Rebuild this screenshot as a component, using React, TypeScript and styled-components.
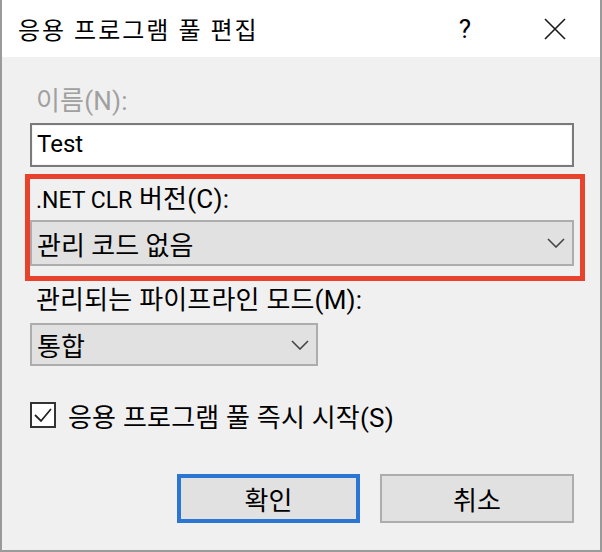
import styled, { createGlobalStyle } from "styled-components";

const GlobalStyle = createGlobalStyle`
    html, body {
        margin: 0;
        padding: 0;
        background: #ffffff;
    }
    * {
        box-sizing: border-box;
    }
`

const Window = styled.div`
    width: 602px;
    height: 552px;
    display: flex;
    flex-direction: column;
    border: 2px solid #9a9a9a;
    border-top: none;
    font-family: Roboto, "Noto Sans CJK KR", sans-serif;
    color: #000000;
    overflow: hidden;
`

const TitleBar = styled.div`
    height: 57px;
    flex: none;
    display: flex;
    align-items: center;
    background: #ffffff;
    padding-left: 16px;
`

const Title = styled.div`
    flex: 1;
    font-size: 24px;
    letter-spacing: 2px;
`

const HelpButton = styled.div`
    width: 90px;
    text-align: center;
    font-size: 26px;
`

const CloseButton = styled.div`
    width: 90px;
    height: 57px;
    display: flex;
    align-items: center;
    justify-content: center;
`

const Body = styled.div`
    flex: 1;
    background: #f0f0f0;
    display: flex;
    flex-direction: column;
    padding: 27px 26px 0 28px;
`

const Label = styled.div<{ $disabled?: boolean }>`
    height: 34px;
    line-height: 34px;
    font-size: 26px;
    letter-spacing: 0.2px;
    padding-left: 6px;
    color: ${p => (p.$disabled ? "#a0a0a0" : "#000000")};
    white-space: nowrap;
`

/* latin run inside a korean label: the original UI font draws it smaller */
const Latin = styled.span`
    font-size: 23px;
    letter-spacing: 0;
`

const TextBox = styled.div`
    height: 44px;
    margin-top: 5px;
    background: #ffffff;
    border: 2px solid #7a7a7a;
    box-shadow: inset 0 0 0 1px #f4f4f4;
    padding-left: 5px;
    font-size: 24px;
    line-height: 38px;
`

const Highlight = styled.div`
    margin: 7px -11px 0 -5px;
    border: 5px solid #e8412c;
    padding: 3px 6px 10px 0;
`

const Combo = styled.div<{ $width?: number; $height: number; $gap: number }>`
    width: ${p => (p.$width ? `${p.$width}px` : "auto")};
    height: ${p => p.$height}px;
    margin-top: ${p => p.$gap}px;
    display: flex;
    align-items: center;
    justify-content: space-between;
    background: #e1e1e1;
    border: 2px solid #adadad;
    padding: 0 7px 0 5px;
    font-size: 26px;
`

const CheckRow = styled.div`
    display: flex;
    align-items: center;
    gap: 12px;
    margin-top: 36px;
    height: 26px;
    font-size: 26px;
    letter-spacing: 0.2px;
`

const CheckBox = styled.div`
    width: 26px;
    height: 26px;
    flex: none;
    background: #ffffff;
    border: 2px solid #333333;
    display: flex;
    align-items: center;
    justify-content: center;
`

const ButtonRow = styled.div`
    display: flex;
    justify-content: flex-end;
    gap: 20px;
    margin-top: 46px;
`

const Button = styled.div<{ $primary?: boolean }>`
    width: ${p => (p.$primary ? 183 : 194)}px;
    height: 49px;
    display: flex;
    align-items: center;
    justify-content: center;
    background: #e1e1e1;
    border: ${p => (p.$primary ? "4px solid #2a76d2" : "2px solid #adadad")};
    font-size: 26px;
`

function Chevron() {
    return (
        <svg width="18" height="10" viewBox="0 0 18 10">
            <path d="M1 1 L9 9 L17 1" fill="none" stroke="#444444" strokeWidth="1.6" />
        </svg>
    );
}

export default function App() {
    return (
        <>
            <GlobalStyle />
            <Window>
                <TitleBar>
                    <Title>응용 프로그램 풀 편집</Title>
                    <HelpButton>?</HelpButton>
                    <CloseButton>
                        <svg width="22" height="22" viewBox="0 0 22 22">
                            <path d="M1 1 L21 21 M21 1 L1 21" stroke="#1a1a1a" strokeWidth="1.6" />
                        </svg>
                    </CloseButton>
                </TitleBar>
                <Body>
                    <Label $disabled>이름(N):</Label>
                    <TextBox>Test</TextBox>
                    <Highlight>
                        <Label><Latin>.NET CLR</Latin> 버전(C):</Label>
                        <Combo $height={46} $gap={4}>
                            <span>관리 코드 없음</span>
                            <Chevron />
                        </Combo>
                    </Highlight>
                    <Label style={{ marginTop: 2 }}>관리되는 파이프라인 모드(M):</Label>
                    <Combo $width={288} $height={43} $gap={6}>
                        <span>통합</span>
                        <Chevron />
                    </Combo>
                    <CheckRow>
                        <CheckBox>
                            <svg width="20" height="16" viewBox="0 0 20 16">
                                <path d="M2 8 L8 14 L18 2" fill="none" stroke="#222222" strokeWidth="1.8" />
                            </svg>
                        </CheckBox>
                        <span>응용 프로그램 풀 즉시 시작(S)</span>
                    </CheckRow>
                    <ButtonRow>
                        <Button $primary>확인</Button>
                        <Button>취소</Button>
                    </ButtonRow>
                </Body>
            </Window>
        </>
    );
}
